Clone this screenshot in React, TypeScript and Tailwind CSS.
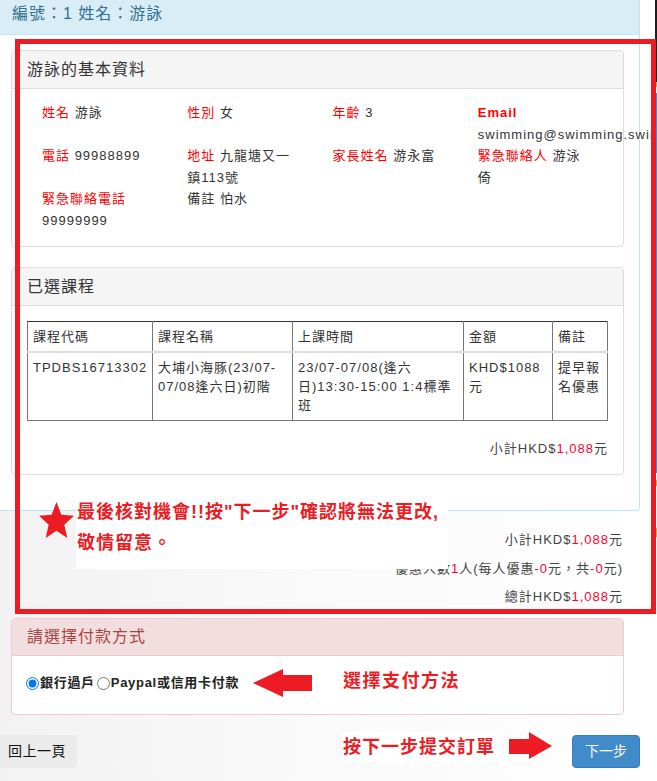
import React from "react";

const RED = "text-[#f00]";

function Field({ label, children, labelRed = true }: { label: string; children?: React.ReactNode; labelRed?: boolean }) {
  return (
    <div className="px-[15px]">
      <span className={labelRed ? RED : "text-[#333]"}>{label}</span> <span className="text-[#333]">{children}</span>
    </div>
  );
}

export default function App() {
  return (
    <div className="relative w-[657px] h-[781px] overflow-hidden bg-white flex font-['Liberation_Sans','Noto_Sans_CJK_TC',sans-serif] text-[13px] tracking-[1px] text-[#333]">
      {/* main column */}
      <div className="w-[655px] h-full overflow-hidden flex flex-col bg-gradient-to-r from-[#f2f2f2] via-[#fafafa] to-white">
        {/* outer info panel */}
        <div className="w-[640px] bg-white border-r border-b border-[#bce8f1] rounded-br-[4px]">
          <div className="h-[35px] bg-[#d9edf7] border-b border-[#bce8f1] pl-[12px] pt-[4px] text-[16px] leading-[20px] text-[#31708f]">
            編號：1 姓名：游詠
          </div>
          <div className="pl-[11px] pr-[15px] pt-[15px] pb-[35px]">
            {/* panel 1 */}
            <div className="border border-[#ddd] rounded-[4px] mb-[20px]">
              <div className="h-[38px] bg-[#f5f5f5] border-b border-[#ddd] px-[15px] text-[16px] leading-[37px] rounded-t-[4px]">
                游詠的基本資料
              </div>
              <div className="px-[15px] pt-[13px] pb-[15px] grid grid-cols-4 leading-[21.5px]">
                <Field label="姓名">游詠</Field>
                <Field label="性別">女</Field>
                <Field label="年齡">3</Field>
                <div className="px-[15px]">
                  <b className={RED}>Email</b>
                  <br />
                  <span className="whitespace-nowrap">swimming@swimming.swimming.com</span>
                </div>
                <Field label="電話">99988899</Field>
                <div className="px-[15px] whitespace-nowrap">
                  <span className={RED}>地址</span> 九龍塘又一
                  <br />
                  鎮113號
                </div>
                <Field label="家長姓名">游永富</Field>
                <div className="px-[15px] whitespace-nowrap">
                  <span className={RED}>緊急聯絡人</span> 游泳
                  <br />
                  倚
                </div>
                <div className="px-[15px] whitespace-nowrap">
                  <span className={RED}>緊急聯絡電話</span>
                  <br />
                  99999999
                </div>
                <Field label="備註" labelRed={false}>怕水</Field>
              </div>
            </div>
            {/* panel 2 */}
            <div className="border border-[#ddd] rounded-[4px]">
              <div className="h-[38px] bg-[#f5f5f5] border-b border-[#ddd] px-[15px] text-[16px] leading-[37px] rounded-t-[4px]">
                已選課程
              </div>
              <div className="p-[15px]">
                <table className="w-full table-fixed border-collapse text-left leading-[19px]">
                  <colgroup>
                    <col className="w-[125px]" />
                    <col className="w-[140px]" />
                    <col className="w-[171px]" />
                    <col className="w-[89px]" />
                    <col className="w-[55px]" />
                  </colgroup>
                  <thead>
                    <tr>
                      {["課程代碼", "課程名稱", "上課時間", "金額", "備註"].map((h) => (
                        <th key={h} className="font-normal px-[5px] py-[5px] border border-[#777] border-t-[#333] border-b-2 border-b-[#ddd] whitespace-nowrap">
                          {h}
                        </th>
                      ))}
                    </tr>
                  </thead>
                  <tbody>
                    <tr className="align-top">
                      <td className="px-[5px] py-[5px] border border-[#777] whitespace-nowrap">TPDBS16713302</td>
                      <td className="px-[5px] py-[5px] border border-[#777] whitespace-nowrap">
                        大埔小海豚(23/07-
                        <br />
                        07/08逢六日)初階
                      </td>
                      <td className="px-[5px] py-[5px] border border-[#777] whitespace-nowrap">
                        23/07-07/08(逢六
                        <br />
                        日)13:30-15:00 1:4標準
                        <br />
                        班
                      </td>
                      <td className="px-[5px] py-[5px] border border-[#777] whitespace-nowrap">
                        KHD$1088
                        <br />
                        元
                      </td>
                      <td className="px-[5px] py-[5px] border border-[#777] whitespace-nowrap">
                        提早報
                        <br />
                        名優惠
                      </td>
                    </tr>
                  </tbody>
                </table>
                <div className="mt-[18px] text-right leading-[20px] text-[#444]">
                  小計HKD$<span className="text-[#ff0033]">1,088</span>元
                </div>
              </div>
            </div>
          </div>
        </div>

        {/* bottom area */}
        <div className="w-[640px] flex-1 pt-[19px] flex flex-col">
          <div className="pr-[17px] flex flex-col gap-[8.5px] text-right leading-[20px] text-[#444]">
            <div>
              小計HKD$<span className="text-[#ff0033]">1,088</span>元
            </div>
            <div>
              優惠人數<span className="text-[#ff0033]">1</span>人(每人優惠<span className="text-[#ff0033]">-0</span>元，共<span className="text-[#ff0033]">-0</span>元)
            </div>
            <div>
              總計HKD$<span className="text-[#ff0033]">1,088</span>元
            </div>
          </div>

          <div className="ml-[11px] mr-[16px] mt-[11px] border border-[#ebccd1] rounded-[4px] bg-white">
            <div className="h-[37px] bg-[#f2dede] border-b border-[#ebccd1] px-[15px] text-[16px] leading-[36px] text-[#a94442] rounded-t-[4px]">
              請選擇付款方式
            </div>
            <div className="pl-[14px] pt-[17px] pb-[21px] leading-[20px] flex items-center font-bold tracking-[0.7px] text-[#222]">
              <input type="radio" name="pay" defaultChecked className="m-0 w-[13px] h-[13px]" />
              <span className="ml-[1px]">銀行過戶</span>
              <input type="radio" name="pay" className="m-0 ml-[2px] w-[13px] h-[13px]" />
              <span className="ml-[1px]">Paypal或信用卡付款</span>
            </div>
          </div>

          <div className="mt-[20px] flex justify-between items-start">
            <div className="w-[77px] h-[33px] bg-[#ebebeb] rounded-r-[4px] pl-[8px] text-[14px] tracking-[0.5px] leading-[33px] text-[#111]">
              回上一頁
            </div>
            <div className="w-[68px] h-[33px] bg-[#428bca] border border-[#357ebd] rounded-[4px] text-white text-[14px] tracking-[0px] leading-[31px] text-center">
              下一步
            </div>
          </div>
        </div>
      </div>

      {/* right strip */}
      <div className="w-[2px] h-full flex flex-col">
        <div className="h-[82px] bg-[#1e1e1e]" />
        <div className="h-[5px] bg-[#f0a030]" />
        <div className="h-[6px] bg-white" />
        <div className="h-[380px] bg-[#2a8ff0]" />
        <div className="h-[7px] bg-white" />
        <div className="h-[6px] bg-[#f0a030]" />
        <div className="h-[42px] bg-white" />
        <div className="h-[9px] bg-[#f0a030]" />
        <div className="flex-1 bg-white" />
      </div>

      {/* annotations */}
      <div className="absolute left-[15px] top-[39px] w-[641px] h-[575px] border-[5px] border-[#ed1c24] pointer-events-none" />

      <svg className="absolute left-[39px] top-[502px]" width="35" height="36" viewBox="0.93 0 36.14 34.37" preserveAspectRatio="none">
        <polygon
          fill="#ed1c24"
          points="19,0 24,12.12 37.07,13.13 27.08,21.63 30.17,34.37 19,27.5 7.83,34.37 10.92,21.63 0.93,13.13 14,12.12"
        />
      </svg>

      <div className="absolute left-[76px] top-[495px] w-[372px] h-[74px] bg-white pl-[1px] pt-[2px] text-[18px] font-bold leading-[31px] tracking-[1px] text-[#ed1c24] whitespace-nowrap">
        最後核對機會!!按"下一步"確認將無法更改,
        <br />
        敬情留意。
      </div>

      <svg className="absolute left-[252px] top-[668px]" width="62" height="31" viewBox="0 0 62 31">
        <polygon fill="#ed1c24" points="1,15 31,1 31,7 60,7 60,23 31,23 31,29" />
      </svg>

      <div className="absolute left-[343px] top-[670px] text-[18px] font-bold leading-[22px] tracking-[1.5px] text-[#ed1c24] whitespace-nowrap">
        選擇支付方法
      </div>

      <div className="absolute left-[342px] top-[732px] w-[158px] h-[30px] bg-white pl-[1px] text-[18px] font-bold leading-[30px] tracking-[1px] text-[#ed1c24] whitespace-nowrap">
        按下一步提交訂單
      </div>

      <svg className="absolute left-[508px] top-[731px]" width="46" height="30" viewBox="0 0 46 30">
        <polygon fill="#ed1c24" points="1,8 21,8 21,1 44,15 21,28 21,23 1,23" />
      </svg>
    </div>
  );
}
